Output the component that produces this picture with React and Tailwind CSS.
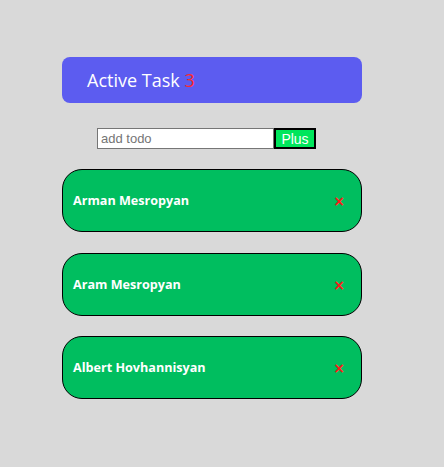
export default function App() {
  const items = ["Arman Mesropyan", "Aram Mesropyan", "Albert Hovhannisyan"];
  return (
    <div className="w-[444px] h-[467px] bg-[#d9d9d9] pt-[57px] pl-[62px]" style={{ fontFamily: '"Open Sans", "Noto Sans", sans-serif' }}>
      <div className="w-[300px] h-[46px] rounded-[8px] bg-[#5c5cf0] flex items-center pl-[25px] text-white text-[18px]">
        <span>Active Task <span className="text-[#ff2a2a]">3</span></span>
      </div>
      <div className="flex mt-[25px] ml-[35px] h-[21px]" style={{ fontFamily: '"Liberation Sans", Arial, sans-serif' }}>
        <input
          className="w-[177px] h-[21px] bg-white border border-[#767676] px-[3px] text-[13px] outline-none placeholder:text-[#757575]"
          placeholder="add todo"
        />
        <button className="h-[21px] w-[42px] bg-[#00e65c] border-2 border-black text-white text-[14px] leading-none flex items-center justify-center">
          Plus
        </button>
      </div>
      <div className="flex flex-col gap-[20.5px] mt-[20px]">
        {items.map((t) => (
          <div key={t} className="w-[300px] h-[63px] rounded-[20px] border border-black bg-[#00be5f] flex items-center justify-between pl-[10px] pr-[16px] pt-[2px]">
            <span className="text-white font-bold text-[12.6px]">{t}</span>
            <span className="text-[#ff1a1a] text-[14px] font-bold" style={{ fontFamily: '"DejaVu Sans", sans-serif' }}>×</span>
          </div>
        ))}
      </div>
    </div>
  );
}
